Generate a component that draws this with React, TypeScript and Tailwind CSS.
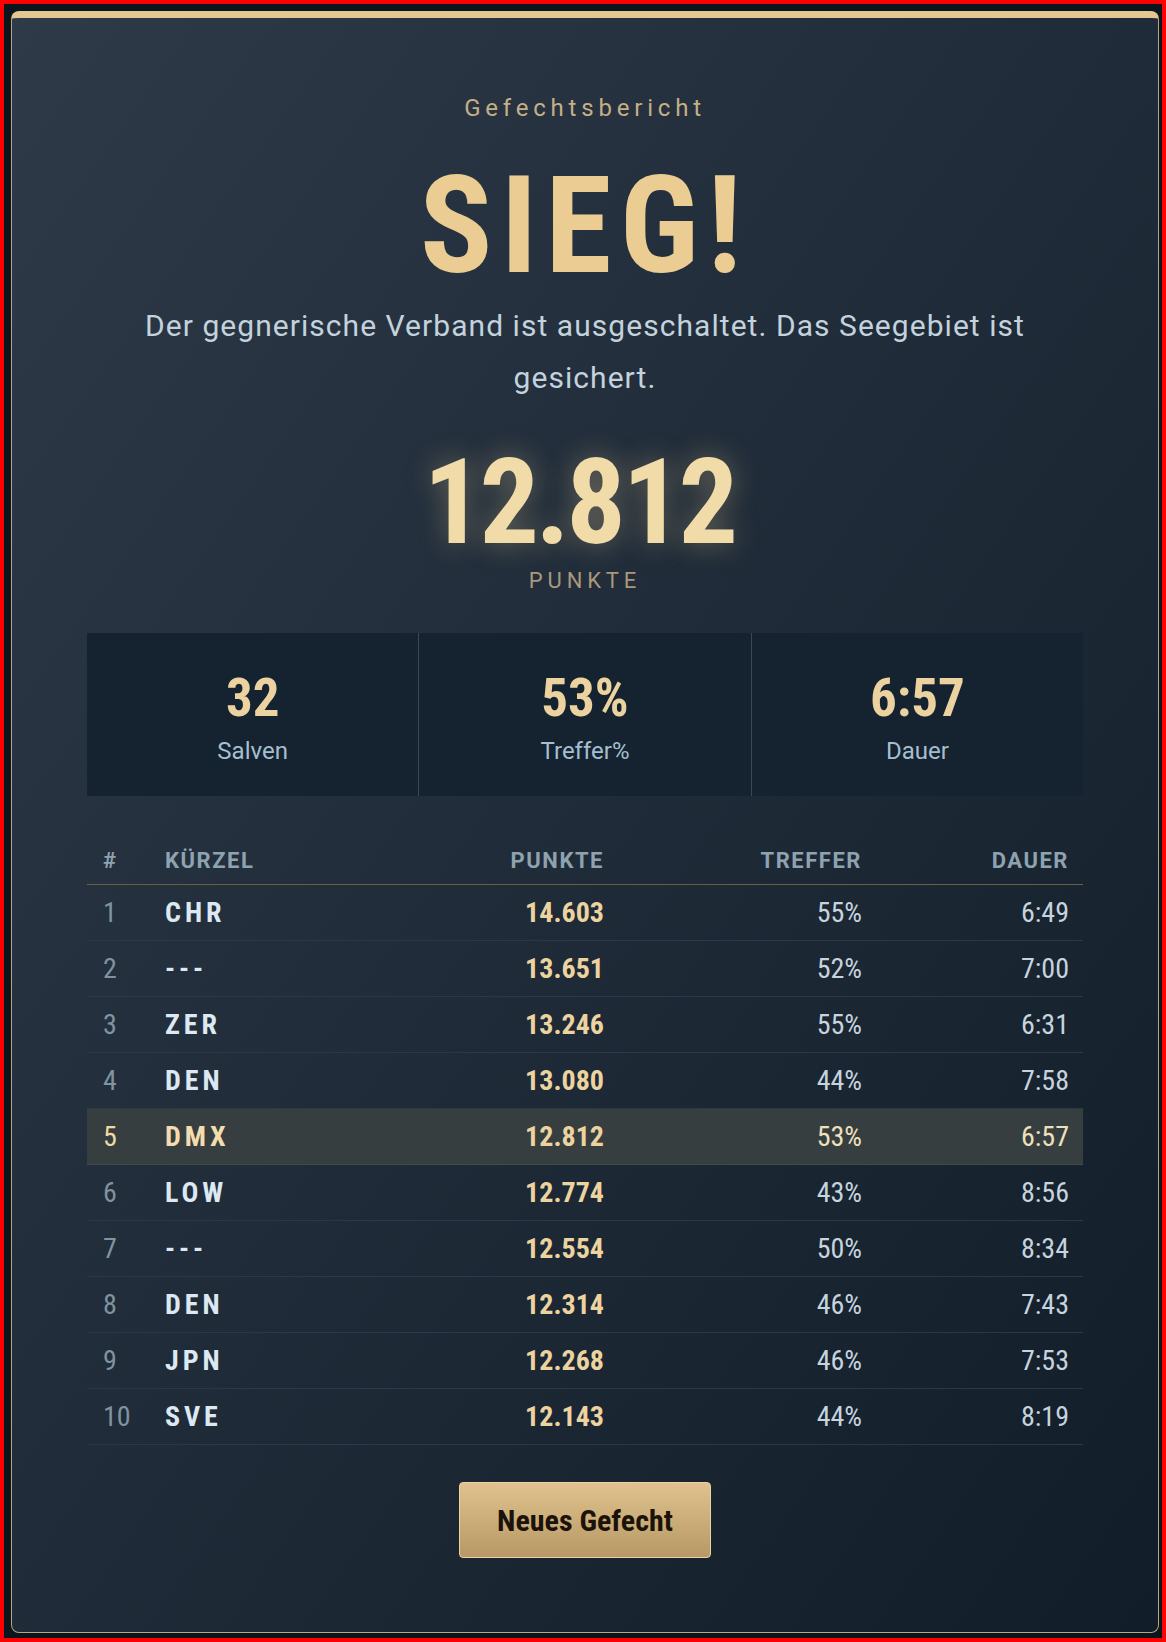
import React from 'react';

type Row = {
  rank: number;
  tag: string;
  points: string;
  hits: string;
  time: string;
  me?: boolean;
};

const rows: Row[] = [
  { rank: 1, tag: 'CHR', points: '14.603', hits: '55%', time: '6:49' },
  { rank: 2, tag: '---', points: '13.651', hits: '52%', time: '7:00' },
  { rank: 3, tag: 'ZER', points: '13.246', hits: '55%', time: '6:31' },
  { rank: 4, tag: 'DEN', points: '13.080', hits: '44%', time: '7:58' },
  { rank: 5, tag: 'DMX', points: '12.812', hits: '53%', time: '6:57', me: true },
  { rank: 6, tag: 'LOW', points: '12.774', hits: '43%', time: '8:56' },
  { rank: 7, tag: '---', points: '12.554', hits: '50%', time: '8:34' },
  { rank: 8, tag: 'DEN', points: '12.314', hits: '46%', time: '7:43' },
  { rank: 9, tag: 'JPN', points: '12.268', hits: '46%', time: '7:53' },
  { rank: 10, tag: 'SVE', points: '12.143', hits: '44%', time: '8:19' },
];

const stats = [
  { value: '32', label: 'Salven' },
  { value: '53%', label: 'Treffer%' },
  { value: '6:57', label: 'Dauer' },
];

const cols = 'grid grid-cols-[64px_267px_200px_258px_207px]';
const cond = "font-['Roboto_Condensed','Roboto',sans-serif]";
const body = "font-['Roboto','Noto_Sans',sans-serif]";

export default function App() {
  return (
    <div className="w-[1166px] border-4 border-[#ff0000] bg-[#0a151d] pl-[7px] pr-[3px] pt-[7px] pb-[5px]">
      <div className="w-[1148px] rounded-[8px] border border-t-[7px] border-[#bba67c] border-t-[#e3c690] bg-linear-to-br from-[#2e3a47] to-[#111d29] px-[75px] pt-[78px] pb-[74px]">
        {/* Kopf */}
        <div className={`${body} text-center text-[24px] leading-none font-normal tracking-[0.2em] text-[#c4af89]`}>
          Gefechtsbericht
        </div>
        <h1 className={`${cond} mt-[39px] text-center text-[135px] leading-none font-bold tracking-[0.06em] text-[#ebcd94]`}>
          SIEG!
        </h1>
        <p className={`${body} mx-auto mt-[6px] max-w-[960px] text-center text-[30px] leading-[52px] tracking-[0.035em] text-[#c3d2dd]`}>
          Der gegnerische Verband ist ausgeschaltet. Das Seegebiet ist gesichert.
        </p>

        {/* Punktzahl */}
        <div className={`${cond} mt-[40px] pr-[12px] text-center text-[118px] leading-none font-bold tracking-[-0.03em] text-[#f0dba9] [text-shadow:0_0_28px_rgba(240,210,150,0.35)]`}>
          12.812
        </div>
        <div className={`${body} mt-[8px] text-center text-[22px] leading-none tracking-[0.22em] text-[#a8997b]`}>
          PUNKTE
        </div>

        {/* Kennzahlen */}
        <div className="mt-[41px] grid grid-cols-3 gap-px bg-[#3a4856]">
          {stats.map((s) => (
            <div key={s.label} className="flex flex-col items-center bg-[#14232f] pt-[39px] pb-[33px]">
              <div className={`${cond} text-[53px] leading-none font-bold text-[#ecd2a0]`}>{s.value}</div>
              <div className={`${body} mt-[14px] text-[24px] leading-none text-[#a6bfcf]`}>{s.label}</div>
            </div>
          ))}
        </div>

        {/* Bestenliste */}
        <div className={`${cond} mt-[54px]`}>
          <div className={`${cols} ${body} border-b border-[#6a5e45] pb-[12px] text-[22px] leading-none font-bold tracking-[0.07em] text-[#8ea2b0]`}>
            <div className="pl-[16px]">#</div>
            <div className="pl-[14px]">KÜRZEL</div>
            <div className="pr-[14px] text-right">PUNKTE</div>
            <div className="pr-[14px] text-right">TREFFER</div>
            <div className="pr-[14px] text-right">DAUER</div>
          </div>
          {rows.map((r) => (
            <div
              key={r.rank}
              className={`${cols} h-[56px] items-center border-b text-[28px] leading-none ${
                r.me ? 'border-[#414a4b] bg-[#363e3f]' : 'border-[#2b3946]'
              }`}
            >
              <div className={`pl-[16px] ${r.me ? 'text-[#efd9a6]' : 'text-[#7f93a1]'}`}>{r.rank}</div>
              <div className={`pl-[14px] font-bold tracking-[0.14em] ${r.me ? 'text-[#f3dcae]' : 'text-[#dce8f2]'}`}>
                {r.tag}
              </div>
              <div className="pr-[14px] text-right font-bold text-[#ecd3a0]">{r.points}</div>
              <div className={`pr-[14px] text-right ${r.me ? 'text-[#eee0bd]' : 'text-[#c6d4df]'}`}>{r.hits}</div>
              <div className={`pr-[14px] text-right ${r.me ? 'text-[#eee0bd]' : 'text-[#c6d4df]'}`}>{r.time}</div>
            </div>
          ))}
        </div>

        <div className="mt-[37px] flex justify-center">
          <button
            className={`${cond} h-[76px] w-[252px] rounded-[4px] border border-[#ead3a2] bg-linear-to-b from-[#e0c28e] to-[#b79966] text-[30px] font-bold text-[#1b1309]`}
          >
            Neues Gefecht
          </button>
        </div>
      </div>
    </div>
  );
}
